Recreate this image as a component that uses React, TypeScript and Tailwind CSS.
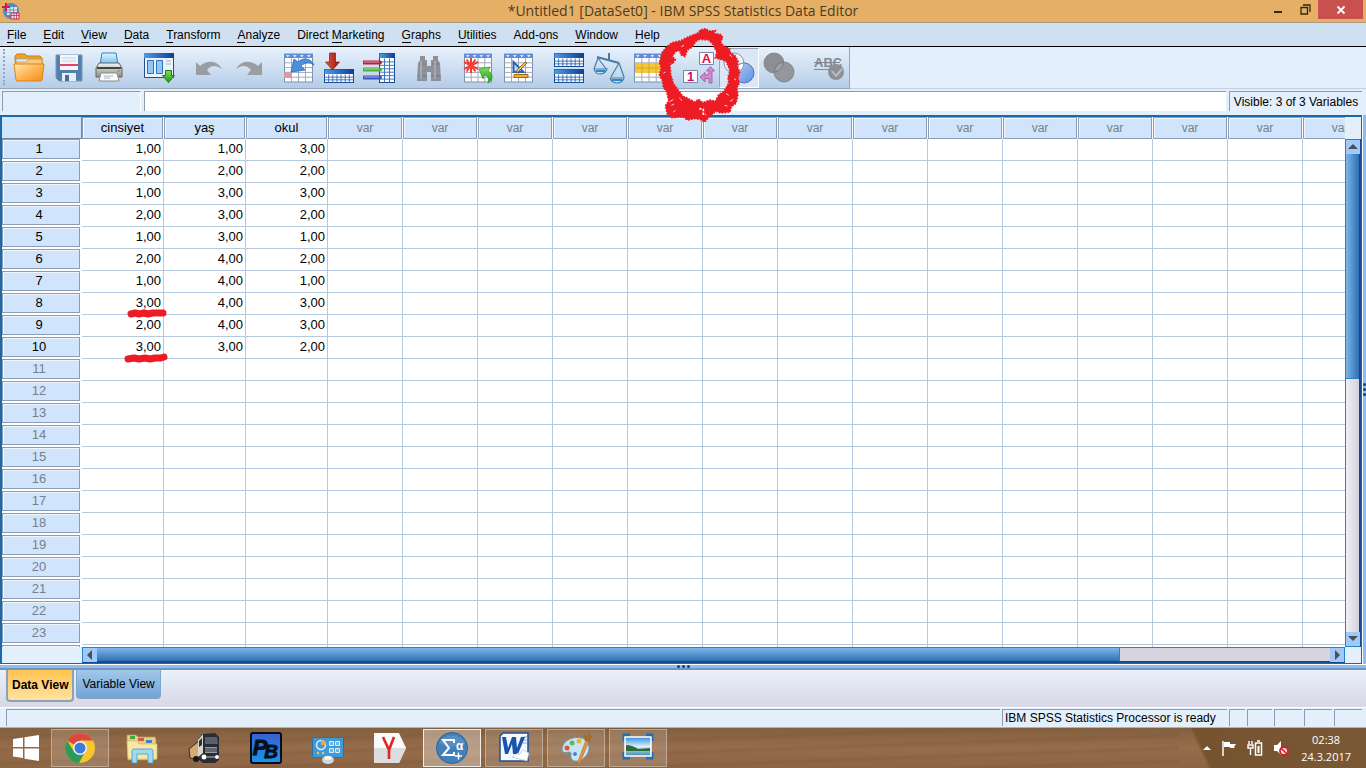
import React from "react";

type IconProps = { children: React.ReactNode };
const Icon = ({ children }: IconProps) => (
  <svg viewBox="0 0 32 32" className="size-8" aria-hidden="true">{children}</svg>
);

const MENUS: [string, string, string][] = [
  ["", "F", "ile"], ["", "E", "dit"], ["", "V", "iew"], ["", "D", "ata"], ["", "T", "ransform"],
  ["", "A", "nalyze"], ["Direct ", "M", "arketing"], ["", "G", "raphs"], ["", "U", "tilities"],
  ["Add-", "o", "ns"], ["", "W", "indow"], ["", "H", "elp"],
];

const ROWS = [
  ["1,00", "1,00", "3,00"], ["2,00", "2,00", "2,00"], ["1,00", "3,00", "3,00"], ["2,00", "3,00", "2,00"],
  ["1,00", "3,00", "1,00"], ["2,00", "4,00", "2,00"], ["1,00", "4,00", "1,00"], ["3,00", "4,00", "3,00"],
  ["2,00", "4,00", "3,00"], ["3,00", "3,00", "2,00"],
];

const Defs = () => (
  <svg className="absolute size-0" aria-hidden="true">
    <defs>
      <linearGradient id="hd" x1="0" x2="1"><stop offset="0" stopColor="#4f9be6" /><stop offset="1" stopColor="#0c3f94" /></linearGradient>
      <linearGradient id="fold" x1="0" y1="0" x2="1" y2="1"><stop offset="0" stopColor="#ffe9b8" /><stop offset=".5" stopColor="#fdb655" /><stop offset="1" stopColor="#f58a14" /></linearGradient>
      <linearGradient id="red" x1="0" x2="1"><stop offset="0" stopColor="#e0574a" /><stop offset="1" stopColor="#9c1208" /></linearGradient>
      <linearGradient id="blueArrow" x1="0" x2="1"><stop offset="0" stopColor="#8fc3f2" /><stop offset="1" stopColor="#1c64b8" /></linearGradient>
      <linearGradient id="green" x1="0" y1="0" x2="0" y2="1"><stop offset="0" stopColor="#7fe05c" /><stop offset="1" stopColor="#1f9a18" /></linearGradient>
      <linearGradient id="metal" x1="0" y1="0" x2="0" y2="1"><stop offset="0" stopColor="#f4f4f2" /><stop offset="1" stopColor="#8b8b88" /></linearGradient>
      <linearGradient id="paper" x1="0" y1="0" x2="0" y2="1"><stop offset="0" stopColor="#e6f6ff" /><stop offset="1" stopColor="#6ab8f2" /></linearGradient>
      <linearGradient id="disc" x1="0" y1="0" x2="1" y2="1"><stop offset="0" stopColor="#b9d2f7" /><stop offset="1" stopColor="#5a8ae2" /></linearGradient>
      <linearGradient id="sky" x1="0" y1="0" x2="0" y2="1"><stop offset="0" stopColor="#2f8de0" /><stop offset=".5" stopColor="#d9effb" /><stop offset="1" stopColor="#3f86a8" /></linearGradient>
      <linearGradient id="pb" x1="0" y1="0" x2="0" y2="1"><stop offset="0" stopColor="#3a5fd0" /><stop offset="1" stopColor="#1597ee" /></linearGradient>
    </defs>
  </svg>
);

type SheetProps = { x: number; y: number; w: number; h: number; cols: number; rows: number };
const Sheet = ({ x, y, w, h, cols, rows }: SheetProps) => (
  <g>
    <rect x={x} y={y} width={w} height={h} fill="#fff" stroke="#7f8fae" />
    <rect x={x} y={y} width={w} height="4" fill="#5f8ddb" />
    {Array.from({ length: cols }, (_, i) => (
      <path key={i} d={`M${x + 1.5 + (i * w) / cols} ${y + 1}l1.8 2.4 1.8-2.4z`} fill="#d4ecff" />
    ))}
    {Array.from({ length: cols - 1 }, (_, i) => (
      <path key={i} d={`M${x + ((i + 1) * w) / cols} ${y + 4}v${h - 4}`} stroke="#a3a9bd" />
    ))}
    {Array.from({ length: rows - 1 }, (_, i) => (
      <path key={i} d={`M${x} ${y + 4 + ((i + 1) * (h - 4)) / rows}h${w}`} stroke="#a3a9bd" />
    ))}
  </g>
);

const BlueTable = ({ x, y, w, h, cols, rows }: SheetProps) => (
  <g>
    <rect x={x} y={y} width={w} height={h} fill="#fff" stroke="#174b96" />
    <rect x={x} y={y} width={w} height="4.5" fill="url(#hd)" />
    {Array.from({ length: cols - 1 }, (_, i) => (
      <path key={i} d={`M${x + ((i + 1) * w) / cols} ${y + 5}v${h - 5}`} stroke="#2d6ab8" strokeWidth=".9" />
    ))}
    {Array.from({ length: rows - 1 }, (_, i) => (
      <path key={i} d={`M${x} ${y + 5 + ((i + 1) * (h - 5)) / rows}h${w}`} stroke="#2d6ab8" strokeWidth=".9" />
    ))}
  </g>
);

const TOOL_GROUPS: { label: string; on?: boolean; art: React.ReactNode }[][] = [
  [
    { label: "Open data document", art: <>
      <path d="M2 8V4l2-2h8l2 2h13l2 2v7H3z" fill="#f0a02c" stroke="#d07c0c" />
      <path d="M3 7h25v5H3z" fill="#d8efff" stroke="#7aa9cc" strokeWidth=".7" />
      <path d="M3 10h10l3-3h13v6H3z" fill="#fbc878" stroke="#db8a1c" strokeWidth=".7" />
      <path d="M1 12h30l-2 16q0 1-2 1H5q-2 0-2-1z" fill="url(#fold)" stroke="#df8212" /></> },
    { label: "Save", art: <>
      <path d="M3 3h26v26H6l-3-3z" fill="#527fae" stroke="#7696bc" />
      <path d="M7 3h18v15H7z" fill="#f3f5f8" /><path d="M7 12h18v2H7z" fill="#e0436c" />
      <path d="M9 6h14M9 9h14" stroke="#cbd1dc" /><path d="M9 21h14v8H9z" fill="#e8edf3" /><path d="M12 23h4v6h-4z" fill="#456b96" /></> },
    { label: "Print", art: <>
      <path d="M9 1h14l2 12H7z" fill="url(#paper)" stroke="#3382bd" />
      <path d="M6 11h20l3 5v9H3v-9z" fill="url(#metal)" stroke="#62625f" />
      <path d="M4 16h24" stroke="#444" strokeWidth="2" /><path d="M8 21h16l2 8H6z" fill="#fafafa" stroke="#8c8c8c" />
      <path d="M11 24h9M11 26h6" stroke="#a9b6c9" /><path d="M24 19h3" stroke="#4fae3f" /></> },
  ],
  [
    { label: "Recall dialogs", art: <>
      <path d="M1.500 1.500h29v24h-29z" fill="#eef3fb" stroke="#244f8f" /><path d="M1 1h30v5H1z" fill="url(#hd)" />
      <path d="M4.500 8.500h6v13h-6zM13.500 8.500h6v13h-6z" fill="#8fc8f6" stroke="#2c71be" />
      <path d="M23 9h5M23 12h5" stroke="#9fb4d0" />
      <path d="M22.500 18.500h6v5h3l-6 7-6-7h3z" fill="url(#green)" stroke="#1b7a16" /></> },
  ],
  [
    { label: "Undo", art: <path d="M3 10l4 4c7-6 17-6 22 3-6-4-11-4-15 1l4 5H3z" fill="#9a9da2" /> },
    { label: "Redo", art: <path d="M29 10l-4 4c-7-6-17-6-22 3 6-4 11-4 15 1l-4 5h15z" fill="#9a9da2" /> },
  ],
  [
    { label: "Go to case", art: <><Sheet x={1.5} y={2} w={28} h={28} cols={4} rows={5} /><path d="M1 21h8v5H1z" fill="#ee8f9c" />
      <path d="M31 13C28 6 20 5 15 10L11 7 8 20l14-2-4-4c4-4 9-4 13-1z" fill="#4a90dc" stroke="#2668b0" strokeWidth=".8" /></> },
    { label: "Go to variable", art: <><BlueTable x={1.5} y={17.5} w={29} h={13} cols={7} rows={3} />
      <path d="M6.500 1h6v9h4l-7 8-7-8h4z" fill="url(#red)" stroke="#8b1710" strokeWidth=".7" /></> },
    { label: "Variables", art: <><BlueTable x={16.5} y={1.5} w={15} h={29} cols={3} rows={7} />
      <path d="M1 10.500h16" stroke="#b82043" strokeWidth="4" strokeLinecap="round" /><path d="M1 17.500h16" stroke="#4daf32" strokeWidth="4" strokeLinecap="round" />
      <path d="M1 25.500h16" stroke="#3d55bf" strokeWidth="4" strokeLinecap="round" /><path d="M1 10h15M1 17h15M1 25h15" stroke="#fff" opacity=".55" /></> },
  ],
  [
    { label: "Find", art: <><path d="M7 4h5v4h2v6h4V8h2V4h5v4l2 3 1 18H18v-9h-4v9H4l1-18 2-3z" fill="#8e9298" />
      <path d="M5 24h9M18 24h10M6 12h7M19 12h7" stroke="#74787e" /><path d="M8 9v18M22 9v18" stroke="#a5a8ac" strokeWidth="2" /></> },
  ],
  [
    { label: "Insert cases", art: <><Sheet x={1.5} y={2} w={27} h={28} cols={4} rows={5} />
      <path d="M8 6v15M1 10l14 7M15 10L1 17M3.500 7.500l9 12M12.500 7.500l-9 12" stroke="#ee4036" strokeWidth="2" />
      <path d="M16 17l11-2-2 4c6 3 5 9 0 12 1-5 0-7-4-8l-1 4z" fill="url(#green)" stroke="#259b20" strokeWidth=".7" /></> },
    { label: "Insert variable", art: <><Sheet x={1.5} y={2} w={28} h={28} cols={4} rows={5} />
      <path d="M10.500 10v10h10z" fill="#b9d9f7" stroke="#2a63b5" strokeWidth="2" />
      <path d="M24 11l-9 9-2 1 1-3 8-8z" fill="#f4c253" stroke="#6a5427" strokeWidth=".8" />
      <path d="M11 22.500h14v3H11z" fill="#f4af2b" stroke="#a9690d" /></> },
  ],
  [
    { label: "Split file", art: <><BlueTable x={1.5} y={1.5} w={29} h={13} cols={7} rows={3} /><BlueTable x={1.5} y={17.5} w={29} h={13} cols={7} rows={3} /></> },
    { label: "Weight cases", art: <g fill="none" stroke="#477da5" strokeWidth="1.200"><path d="M4 5l22 6" strokeWidth="2" /><path d="M16 1v7" strokeWidth="2" />
      <path d="M5 6L1 17M5 6l8 11M26 11l-8 14M26 11l5 14" /><path d="M1 17h13q-2 5-7 5t-6-5M17 26h14q-2 5-7 5t-7-5" fill="#bfe4f7" /><path d="M3 19h9M19 28h10" stroke="#2a8ac7" strokeWidth="2" /></g> },
    { label: "Select cases", art: <><Sheet x={1.5} y={2} w={29} h={28} cols={4} rows={5} /><path d="M2 11h28v10H2z" fill="#f4c83c" /><path d="M9 11v10M16 11v10M23 11v10M2 16h28" stroke="#d9a827" /></> },
  ],
  [
    { label: "Value labels", art: <><g stroke="#7885a8"><path d="M.5 18.500h14v12H.5zM16.500 .5h14v12h-14z" fill="#fcfcff" /></g>
      <text x="7.500" y="29" textAnchor="middle" fontSize="13" fontWeight="700" fill="#c8105c" fontFamily="Liberation Sans, sans-serif">1</text>
      <text x="23.500" y="11" textAnchor="middle" fontSize="13" fontWeight="700" fill="#e0104c" fontFamily="Liberation Sans, sans-serif">A</text>
      <path d="M17 25l5-4.500v3l4-2V19h-2.500l4-4.500 4 4.500H29v12h-3v-4.500h-4V30z" fill="#d58bd0" stroke="#94559e" strokeWidth=".8" /></> },
    { label: "Use variable sets", on: true, art: <><circle cx="11" cy="11" r="10" fill="#f5f8ff" fillOpacity=".65" stroke="#8b95ad" /><circle cx="21" cy="21" r="10" fill="url(#disc)" stroke="#5472b5" />
      <path d="M11.500 21A10 10 0 0 1 21 11 10 10 0 0 1 11.500 21" fill="#fff" stroke="#8b95ad" /></> },
    { label: "Show all variables", art: <><circle cx="11" cy="11" r="10" fill="#8b8f95" stroke="#85898e" /><circle cx="21" cy="20" r="10" fill="#94979c" stroke="#85898e" />
      <path d="M11.500 20A10 10 0 0 1 20.500 10 10 10 0 0 1 11.500 20" fill="#9da0a5" stroke="#777b80" /></> },
  ],
  [
    { label: "Spell check", art: <><text x="1" y="15" fontSize="13" fontWeight="700" fill="#85898f" fontFamily="Liberation Sans, sans-serif">ABC</text><path d="M1 17.500h15M1 10.500h26" stroke="#85898f" strokeWidth="1.200" />
      <circle cx="23" cy="20" r="8" fill="#8c9095" /><path d="M19 19l4 5 6-7" stroke="#b9bcc0" strokeWidth="2" fill="none" /></> },
  ],
];

const TASKS: { label: string; frame: string; art: React.ReactNode }[] = [
  { label: "Google Chrome", frame: "border-white/35 bg-white/15", art: <><circle cx="16" cy="16" r="15" fill="#f6c631" /><path d="M16 16L3 8.500A15 15 0 0 1 29 8.500H16z" fill="#d94a3d" /><path d="M3 8.500A15 15 0 0 0 15 31l6-11-5-4-7 2z" fill="#2c9b58" /><circle cx="16" cy="16" r="7" fill="#f5f3ef" /><circle cx="16" cy="16" r="5.500" fill="#3b7be0" /></> },
  { label: "File Explorer", frame: "border-transparent", art: <><path d="M1 6V3h9l2 2h17l1 3v20H2z" fill="#e9cf7b" stroke="#b59a48" strokeWidth=".7" /><path d="M4 4h5v3H4z" fill="#45a545" /><path d="M12 6h6v3h-6z" fill="#d45847" /><path d="M20 8h6v3h-6z" fill="#3b82cf" /><path d="M1 9h10l2 3h18v15H2z" fill="#f7e8a6" stroke="#d1b969" strokeWidth=".7" /><path d="M6 19q0-2 2-2h17q2 0 2 2v12h-5v-9H11v9H6z" fill="#9fd9f3" stroke="#4698c9" strokeWidth=".8" /></> },
  { label: "Truck simulator", frame: "border-transparent", art: <><path d="M1 17l10-8v19l-9-2z" fill="#d4ab70" stroke="#382a1c" /><path d="M10 8l4-6 13-1 4 4v23l-4 3H15l-5-4z" fill="#292c32" /><path d="M10 8l5-6v19l-5 4z" fill="#d7d5ce" /><path d="M11 9l3-3v7l-3 2z" fill="#2b3038" /><path d="M17 5h12l1 7H17z" fill="#59616d" /><path d="M17 15h12v6H17z" fill="#8f9ba8" /><path d="M17 17h12M17 19h12" stroke="#30333a" /><circle cx="16" cy="25" r="2.500" fill="#fff" /><circle cx="29" cy="25" r="2" fill="#fff" /><path d="M19 25h8" stroke="#777" strokeWidth="2" /><circle cx="8" cy="27" r="3" fill="#181818" /></> },
  { label: "Point Blank", frame: "border-transparent", art: <><rect x="1" y="1" width="30" height="30" rx="2" fill="url(#pb)" stroke="#050b18" strokeWidth="2" /><text x="10" y="23" textAnchor="middle" fontSize="22" fontWeight="700" fontStyle="italic" fill="#06101d" stroke="#06101d" fontFamily="Liberation Sans, sans-serif">P</text><text x="21" y="26" textAnchor="middle" fontSize="19" fontWeight="700" fontStyle="italic" fill="#06101d" stroke="#06101d" fontFamily="Liberation Sans, sans-serif">B</text></> },
  { label: "Control Panel", frame: "border-transparent", art: <><rect x=".5" y="5.500" width="31" height="20" rx="1" fill="#4199d5" stroke="#2672aa" /><circle cx="9" cy="13" r="4.500" fill="none" stroke="#d9f0ff" strokeWidth="1.500" /><path d="M9 13V8a5 5 0 0 1 5 5z" fill="#f4a536" /><path d="M17.500 9.500h4v4h-4zM23.500 9.500h4v4h-4zM17.500 16.500h4v4h-4zM23.500 16.500h4v4h-4z" fill="#69b6e7" stroke="#d7efff" /><circle cx="6" cy="21" r="1.200" fill="#f7c25b" /><circle cx="11" cy="21" r="1.200" fill="#f7c25b" /><ellipse cx="16" cy="28" rx="6" ry="4" fill="#d4d6d8" /><ellipse cx="16" cy="26" rx="4" ry="2" fill="#f5f5f5" /></> },
  { label: "Yandex", frame: "border-transparent", art: <><path d="M0 1h25l7 15-7 15H0z" fill="#fafafa" /><path d="M0 16h32l-7 15H0z" fill="#dcdddf" /><path d="M9 5l6 13v9M20 5l-5 13" fill="none" stroke="#df2424" strokeWidth="2.600" /></> },
  { label: "IBM SPSS Statistics", frame: "border-white/80 bg-white/35", art: <><circle cx="16" cy="16" r="15.500" fill="#437fb8" stroke="#2e6399" /><path d="M3 11A15 15 0 0 1 29 11Q16 18 3 11" fill="#76a5d0" opacity=".45" /><path d="M18 11V8H7l6 8-6 7h11v-3" fill="none" stroke="#fff" strokeWidth="2" /><text x="20" y="18" fontSize="12" fontWeight="700" fill="#fff" fontFamily="Liberation Sans, sans-serif">α</text><path d="M19 24h7M22.500 20.500v7" stroke="#fff" strokeWidth="1.500" /></> },
  { label: "Microsoft Word", frame: "border-white/35 bg-white/15", art: <><path d="M5 1h25v28H2V4z" fill="#f4f8ff" stroke="#244d91" strokeWidth="1.500" /><path d="M25 5h4M25 8h4M25 11h4" stroke="#83a8d8" /><path d="M4 5h4l2 11 4-11h4l1 11 4-11h4l-7 17h-5l-1-10-4 10H7z" fill="#1954ac" /><path d="M14 25l6-4 1 2 4-5 6 3-2 8z" fill="#fff" stroke="#b8c1d0" strokeWidth=".7" /></> },
  { label: "Paint", frame: "border-white/35 bg-white/15", art: <><path d="M2 17C3 8 13 4 22 6c8 2 9 12 4 18-5 6-13 7-15 2-1-4 2-5-2-6-4 1-7 1-7-3z" fill="#c7e5f3" stroke="#6796b2" /><circle cx="7" cy="16" r="2.500" fill="#e25146" /><circle cx="12" cy="11" r="2.500" fill="#61b959" /><circle cx="19" cy="9" r="2.500" fill="#efb137" /><circle cx="15" cy="22" r="2" fill="#557cca" /><path d="M26 8l3 1-9 22-3 1z" fill="#e8923f" stroke="#b86a25" strokeWidth=".6" /><path d="M25 9l-2-7 4 2 2-4 3 5-3 5z" fill="#a96a32" /></> },
  { label: "Pictures", frame: "border-white/35 bg-white/15", art: <><path d="M2 9V3h6M24 3h6v6M30 20v6h-6M8 26H2v-6" fill="none" stroke="#1c6fb8" strokeWidth="3" /><rect x="3" y="5" width="26" height="19" fill="url(#sky)" stroke="#fff" strokeWidth="1.500" /><path d="M4 13q6 0 12 4l12-1v3H4z" fill="#31693f" /></> },
];

const COLUMNS = ["cinsiyet", "yaş", "okul"];
const VAR_COUNT = 14;

function DataGrid() {
  return (
    <div className="min-h-0 flex-1 overflow-hidden bg-white">
      <table className="w-max table-fixed border-separate border-spacing-0">
        <colgroup>
          <col className="w-20" />
          {COLUMNS.map((c) => <col key={c} className="w-[82px]" />)}
          {Array.from({ length: VAR_COUNT }, (_, i) => <col key={i} className="w-[75px]" />)}
        </colgroup>
        <thead>
          <tr className="h-[22px]">
            <th className="w-20 p-0"><div className="h-[22px] w-20 border-r border-b border-[#75859c] bg-[#d0e4fc]" /></th>
            {[...COLUMNS, ...Array.from({ length: VAR_COUNT }, () => "var")].map((name, i) => (
              <th key={i} scope="col" className="p-0 pr-px font-normal">
                <div className={`h-[22px] border border-[#8b9cb6] bg-[#d0e4fc] leading-5 shadow-[inset_1px_1px_0_#eef6ff] ${i < 3 ? "w-[81px] text-[13px] text-black" : "w-[74px] text-[#77808c]"}`}>{name}</div>
              </th>
            ))}
          </tr>
        </thead>
        <tbody className="text-[13px]">
          {Array.from({ length: 24 }, (_, r) => (
            <tr key={r} className="h-[22px]">
              <th scope="row" className="p-0 font-normal">
                <div className={`mr-0.5 mb-0.5 h-5 border border-[#8b9cb6] bg-[#d0e4fc] leading-[18px] shadow-[inset_1px_1px_0_#eef6ff] ${r < ROWS.length ? "text-black" : "text-[#77808c]"}`}>
                  {r < 23 && <span className="pr-1">{r + 1}</span>}
                </div>
              </th>
              {Array.from({ length: 3 + VAR_COUNT }, (_, c) => (
                <td key={c} className="border-r border-b border-[#b5cade] p-0 pr-0.5 text-right align-top leading-5 text-black">{ROWS[r]?.[c]}</td>
              ))}
            </tr>
          ))}
        </tbody>
      </table>
    </div>
  );
}

const scrollBtn = "flex size-3.5 shrink-0 items-center justify-center bg-[#9fc9f8]";

export default function App() {
  return (
    <div className="relative flex h-screen flex-col overflow-hidden bg-[#e3effb] font-['Liberation_Sans',Arial,sans-serif] text-[12px] text-black">
      <Defs />
      <header className="relative flex h-[23px] shrink-0 items-center justify-center border-b border-[#a99a80] bg-[#e5b066]">
        <svg viewBox="0 0 18 18" className="absolute top-0.5 left-0.5 size-[18px]" aria-hidden="true">
          <circle cx="9" cy="9" r="8" fill="#5c89b5" /><path d="M5 5h10v8H5z" fill="#dbe8f5" /><path d="M5 8h10M5 10.500h10M8 5v8M11.500 5v8" stroke="#5c89b5" strokeWidth=".8" />
          <path d="M4 1v8M0 5h8" stroke="#c91f45" strokeWidth="2" /><path d="M9 11h8v6H9z" fill="#f7e8ed" stroke="#c62a4d" /><path d="M9 13.500h8M12 11v6M14.500 11v6" stroke="#c62a4d" strokeWidth=".8" />
        </svg>
        <h1 className="font-['Open_Sans','Noto_Sans',sans-serif] text-[14px] leading-5 text-[#4c3a22]">*Untitled1 [DataSet0] - IBM SPSS Statistics Data Editor</h1>
        <div className="absolute top-0 right-[3px] flex h-[19px]">
          <button aria-label="Minimize" className="flex w-7 items-end justify-center pb-1.5"><span className="h-0.5 w-2 bg-[#332714]" /></button>
          <button aria-label="Restore" className="flex w-[26px] items-center justify-center">
            <svg viewBox="0 0 11 11" className="size-[11px]"><path d="M1 3.500h6.500v6.500H1zM3 1h7v7" fill="none" stroke="#332714" strokeWidth="1.300" /></svg>
          </button>
          <button aria-label="Close" className="flex w-[45px] items-center justify-center bg-[#c8504f]">
            <svg viewBox="0 0 10 10" className="size-2.5"><path d="M1.500 1.500l7 7M8.500 1.500l-7 7" stroke="#fff" strokeWidth="1.800" /></svg>
          </button>
        </div>
      </header>

      <nav className="flex h-6 shrink-0 items-center gap-[17px] border-b border-black bg-[#cfe0f1] pl-[7px]">
        {MENUS.map(([a, b, c]) => (
          <button key={a + b + c} className="leading-4 whitespace-pre">{a}<span className="border-b border-black">{b}</span>{c}</button>
        ))}
      </nav>

      <div className="flex h-[42px] shrink-0">
        <div className="flex items-center gap-2.5 border-r border-b border-[#98a6b8] bg-linear-to-b from-[#e9f2fc] to-[#b4cde8] pl-[9px]">
          {TOOL_GROUPS.map((group, g) => (
            <div key={g} className="flex">
              {group.map((t) => (
                <button key={t.label} aria-label={t.label} className={`flex h-10 w-10 items-center justify-center ${t.on ? "border border-t-[#98a6b8] border-r-white border-b-white border-l-[#98a6b8] bg-[#d9e7f6]" : ""}`}><Icon>{t.art}</Icon></button>
              ))}
            </div>
          ))}
        </div>
        <div className="flex-1 border-b border-[#c3d0df]" />
        <span className="absolute top-[49px] left-[3px] h-9 border-l-2 border-dotted border-[#94a7bf]" />
      </div>

      <div className="flex h-[26px] shrink-0 gap-[3px] pt-0.5 pr-1 pb-1 pl-0.5">
        <div className="w-[139px] border-t border-l border-[#8d9bb0] border-r border-r-white" />
        <input aria-label="Cell editor" className="min-w-0 flex-1 border-t border-l border-[#8d9bb0] bg-white px-1 outline-none" />
        <div className="w-[133px] border-t border-l border-[#8d9bb0] px-0.5 text-center leading-5 whitespace-nowrap">Visible: 3 of 3 Variables</div>
      </div>

      <main className="flex min-h-0 flex-1">
        <section className="flex min-w-0 flex-1 flex-col border-2 border-r border-b border-[#1c68a8] bg-white">
          <div className="flex min-h-0 flex-1">
            <div className="flex min-w-0 flex-1 flex-col"><DataGrid /></div>
            <div className="flex w-4 shrink-0 flex-col bg-[#e3effb] pt-[22px]">
              <div className="flex flex-1 flex-col border border-r-2 border-[#2382c9] border-r-[#154b8a]">
                <button aria-label="Scroll up" className={scrollBtn}><svg viewBox="0 0 10 6" className="h-1.5 w-2.5"><path d="M5 0l5 5H0z" fill="#4d4d55" /></svg></button>
                <div className="flex-1 bg-linear-to-r from-[#f1f0f4] to-[#d3d0da]"><div className="h-[47%] border-b border-[#2382c9] bg-linear-to-r from-[#7db5e8] to-[#2d70b6]" /></div>
                <button aria-label="Scroll down" className={scrollBtn}><svg viewBox="0 0 10 6" className="h-1.5 w-2.5"><path d="M0 0h10L5 5z" fill="#4d4d55" /></svg></button>
              </div>
            </div>
          </div>
          <div className="flex h-4 shrink-0 bg-[#e3effb] pr-4 pl-20">
            <div className="flex flex-1 border border-b-2 border-[#2382c9] border-b-[#154b8a]">
              <button aria-label="Scroll left" className={scrollBtn}><svg viewBox="0 0 6 10" className="h-2.5 w-1.5"><path d="M5 0v10L0 5z" fill="#4d4d55" /></svg></button>
              <div className="flex-1 bg-[#d6d4de]"><div className="h-full w-[83%] border-r border-[#2382c9] bg-linear-to-b from-[#7db5e8] to-[#2d70b6]" /></div>
              <button aria-label="Scroll right" className={scrollBtn}><svg viewBox="0 0 6 10" className="h-2.5 w-1.5"><path d="M1 0v10l5-5z" fill="#4d4d55" /></svg></button>
            </div>
          </div>
        </section>
        <div className="flex w-1 shrink-0 flex-col items-center justify-center gap-0.5 border-l border-white bg-[#8dbcf0]">
          {[0, 1, 2].map((i) => <span key={i} className="size-[3px] rounded-full bg-[#173f80]" />)}
        </div>
      </main>
      <div className="flex h-1.5 shrink-0 items-center justify-center gap-0.5 border-t border-b-2 border-t-white border-b-[#7096bd] bg-[#8ebdf2]">
        {[0, 1, 2].map((i) => <span key={i} className="size-[3px] rounded-full bg-[#173f80]" />)}
      </div>

      <div role="tablist" className="flex h-[37px] shrink-0 items-start gap-0.5 bg-linear-to-b from-[#e8f1fc] to-[#d9d7e4] pl-1.5">
        <button role="tab" aria-selected="true" className="h-8 rounded-b border-2 border-t-0 border-[#8aa3b5] bg-linear-to-b from-[#ffc44d] to-[#ffe2a0] px-1 font-bold">Data View</button>
        <button role="tab" aria-selected="false" className="h-[29px] rounded-b border border-t-0 border-[#7fa6cd] bg-linear-to-b from-[#a1c8ea] to-[#73a3d3] px-[5px]">Variable View</button>
      </div>

      <footer className="flex h-[21px] shrink-0 gap-0.5 border-t border-b border-t-white border-b-[#a6b3c4] pt-px pr-1 pb-px pl-1.5">
        <div className="flex-1 border-t border-l border-[#8d9bb0]" />
        <div className="w-[225px] border-t border-l border-[#8d9bb0] px-0.5 leading-4 whitespace-nowrap">IBM SPSS Statistics Processor is ready</div>
        <div className="w-4 border-t border-l border-[#8d9bb0]" />
        <div className="w-[25px] border-t border-l border-[#8d9bb0]" />
        <div className="w-7 border-t border-l border-[#8d9bb0]" />
        <div className="w-7 border-t border-l border-[#8d9bb0]" />
        <div className="w-7 border-t border-l border-[#8d9bb0]" />
      </footer>

      <div className="flex h-10 shrink-0 items-stretch bg-linear-to-b from-[#83603f] via-[#976d4b] to-[#8c6544]">
        <div className="flex flex-1 items-stretch bg-[repeating-linear-gradient(178deg,transparent_0px,transparent_6px,#6f4a2c33_9px,transparent_13px)]">
          <button aria-label="Start" className="flex w-[51px] items-center justify-center">
            <svg viewBox="0 0 28 26" className="h-[26px] w-7"><path d="M1 4l10-1.500V12H1zM12.500 2.300L27 0v12H12.500zM1 13.500h10V23L1 21.500zM12.500 13.500H27V26l-14.500-2.300z" fill="#fff" /></svg>
          </button>
          <div className="flex gap-1 py-px">
            {TASKS.map((t) => (
              <button key={t.label} aria-label={t.label} className={`flex w-[58px] items-center justify-center border ${t.frame}`}><Icon>{t.art}</Icon></button>
            ))}
          </div>
        </div>
        <div className="flex items-center gap-2.5 bg-linear-[65deg,transparent_14%,#76532f_16%,#7a5836] pr-[15px] pl-6 text-white">
          <svg viewBox="0 0 8 6" className="h-1.5 w-2"><path d="M4 1l4 4H0z" fill="#fff" /></svg>
          <svg viewBox="0 0 16 16" className="size-4"><path d="M2 1v15" stroke="#fff" strokeWidth="1.500" /><path d="M3 2h6v2h6l-2 3 1 1H9V7H3z" fill="#fff" /></svg>
          <svg viewBox="0 0 16 16" className="size-4"><path d="M2 1v3M5 1v3M1 5h5v3H1zM3.500 8v7" stroke="#fff" strokeWidth="1.400" fill="none" /><path d="M8.500 3h6v12h-6zM10 1h3" fill="none" stroke="#fff" strokeWidth="1.500" /><path d="M10.500 6h2v7h-2z" fill="#fff" /></svg>
          <svg viewBox="0 0 16 16" className="size-4"><path d="M1 5h3l4-4v14l-4-4H1z" fill="#fff" /><circle cx="11" cy="11" r="4" fill="#f3d9d9" stroke="#c9222b" strokeWidth="1.800" /><path d="M8.500 8.500l5 5" stroke="#c9222b" strokeWidth="1.500" /></svg>
          <div className="pl-0.5 text-center font-['Open_Sans','Noto_Sans',sans-serif] text-[11px] leading-[17px]"><div>02:38</div><div>24.3.2017</div></div>
        </div>
      </div>

      <svg viewBox="0 0 300 330" className="pointer-events-none absolute top-[22px] left-[650px] h-[110px] w-[100px]" aria-hidden="true">
        <path fillRule="evenodd" fill="#ed1c24" stroke="#ed1c24" strokeWidth="5" strokeDasharray="5 4" d="M132 38L146 32 150 24 168 20 176 27 196 26 192 34 213 38 218 46 212 62 222 72 238 80 242 92 256 102 264 118 262 132 269 150 264 168 268 184 260 198 264 218 258 244 244 254 240 270 214 273 198 268 180 282 164 300 150 292 134 290 112 294 98 284 66 287 52 276 46 252 56 236 50 210 40 196 38 178 28 158 34 138 28 122 36 92 48 76 66 62 92 56 116 44Z M150 52L138 58 126 76 112 84 105 104 92 98 91 86 78 88 66 104 76 112 68 126 60 124 62 156 70 184 86 206 98 222 116 230 134 240 146 232 158 242 180 234 196 238 206 218 222 208 236 184 234 166 240 146 228 118 212 112 196 108 200 90 188 66 176 54Z" />
        <path d="M148 260l12 2v14l8 2" stroke="#fff" strokeWidth="5" fill="none" strokeDasharray="7 4" />
        <path d="M58 240l12-8M64 250l8-4M88 228l8 8M238 98l8 6M228 214l8 6M240 238l10-6M224 250l8 2M94 74l8-4M252 170l6 4M46 150l-6 4M70 270l6-4" stroke="#f3d4dc" strokeWidth="3" />
      </svg>
      <svg viewBox="0 0 48 56" className="pointer-events-none absolute top-[308px] left-[122px] h-14 w-12" aria-hidden="true">
        <path d="M9 6l4-1 4 1 5-1 4 1 5-1 5 0 5 0M6 51l6-1 5 1 6-1 5 1 5-1 6 0 3-1" fill="none" stroke="#ed1c24" strokeWidth="7" strokeLinecap="round" strokeLinejoin="round" />
      </svg>
    </div>
  );
}
